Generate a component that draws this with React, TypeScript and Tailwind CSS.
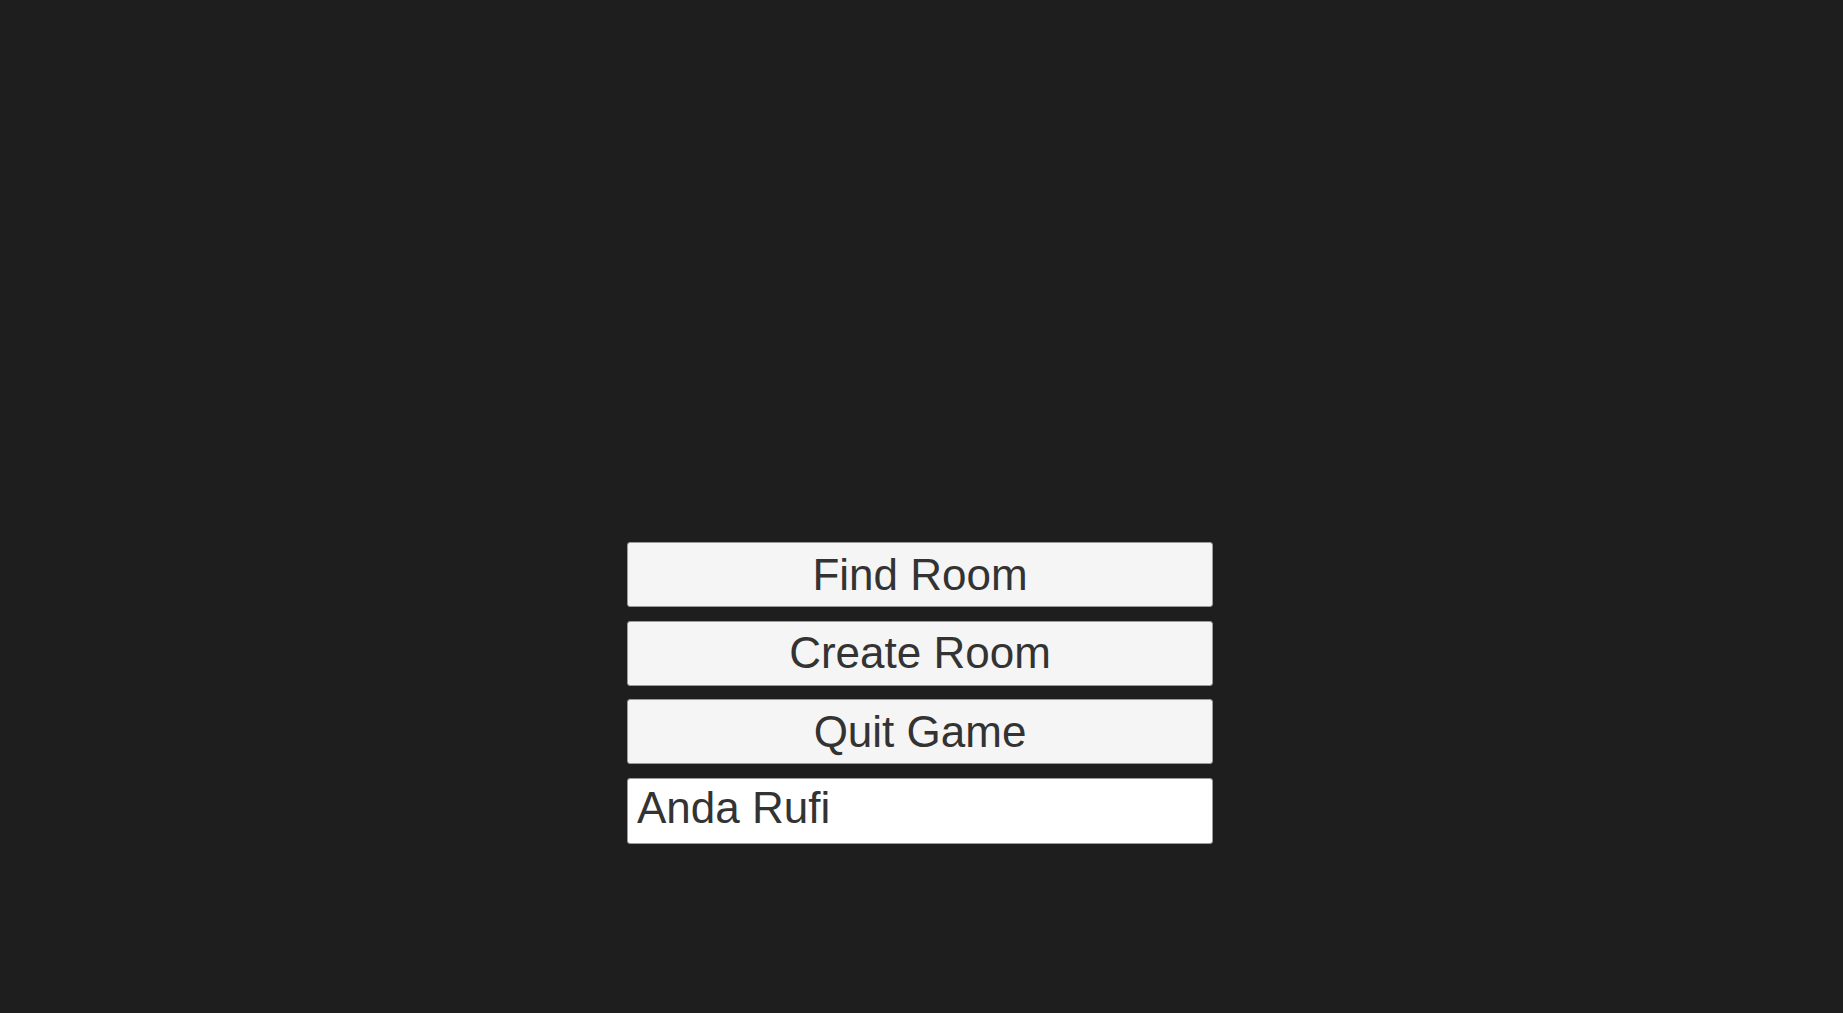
import React from "react";

const buttons = ["Find Room", "Create Room", "Quit Game"];

export default function App() {
    return (
        <div
            className="w-full h-[1013px] bg-[#1e1e1e] flex flex-col items-center pt-[542px] pr-[3px] gap-[13.5px] overflow-hidden"
            style={{ fontFamily: '"Liberation Sans", Arial, sans-serif' }}
        >
            {buttons.map((label) => (
                <button
                    key={label}
                    className="w-[586px] h-[65px] shrink-0 bg-[#f5f5f5] border border-[#9a9a9a] rounded-[3px] text-[44px] leading-none text-[#333333] flex items-center justify-center"
                >
                    {label}
                </button>
            ))}
            <div className="w-[586px] h-[66px] shrink-0 bg-white border border-[#9a9a9a] rounded-[3px] text-[44px] leading-none text-[#333333] flex items-center pl-[9px] pb-[5px]">
                Anda Rufi
            </div>
        </div>
    );
}
